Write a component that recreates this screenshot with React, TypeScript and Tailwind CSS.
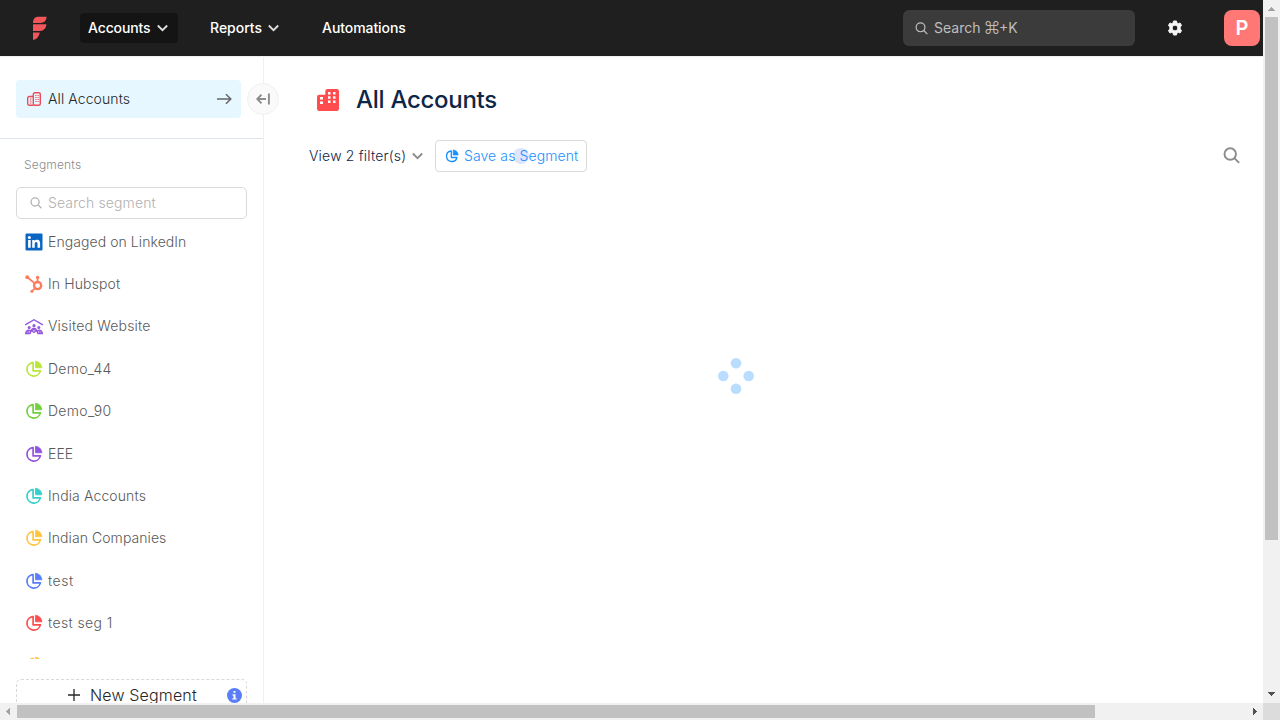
import React from "react";

type Row = { label: string; color: string; kind: "linkedin" | "hubspot" | "visit" | "pie"; tracking: string };

const rows: Row[] = [
  { label: "Engaged on LinkedIn", color: "#0a66c2", kind: "linkedin", tracking: "tracking-[.07px]" },
  { label: "In Hubspot", color: "#ff7a59", kind: "hubspot", tracking: "tracking-[.13px]" },
  { label: "Visited Website", color: "#9254de", kind: "visit", tracking: "tracking-[.19px]" },
  { label: "Demo_44", color: "#bae637", kind: "pie", tracking: "tracking-[.25px]" },
  { label: "Demo_90", color: "#73d13d", kind: "pie", tracking: "tracking-[.3px]" },
  { label: "EEE", color: "#9254de", kind: "pie", tracking: "tracking-[.1px]" },
  { label: "India Accounts", color: "#36cfc9", kind: "pie", tracking: "tracking-[.12px]" },
  { label: "Indian Companies", color: "#ffc53d", kind: "pie", tracking: "tracking-[.07px]" },
  { label: "test", color: "#597ef7", kind: "pie", tracking: "tracking-[.5px]" },
  { label: "test seg 1", color: "#ff4d4f", kind: "pie", tracking: "tracking-[.38px]" },
  { label: "", color: "#ffc53d", kind: "pie", tracking: "tracking-normal" },
];

function Pie({ color, size }: { color: string; size: number }) {
  return (
    <svg width={size} height={size} viewBox="0 0 18 18" fill="none" className="shrink-0">
      <path d="M7.5 2.6A6.8 6.8 0 1 0 15.4 10.9H8.1V2.5Z" stroke={color} strokeWidth="1.7" strokeLinejoin="round" />
      <path d="M10.5 1.2A7 7 0 0 1 16.9 7.8H10.5Z" fill={color} stroke={color} strokeWidth=".8" strokeLinejoin="round" />
    </svg>
  );
}

function SegmentIcon({ kind, color }: { kind: string; color: string }) {
  if (kind === "linkedin")
    return (
      <svg width="20" height="20" viewBox="0 0 20 20" className="shrink-0">
        <rect x="1.5" y="1.5" width="17" height="17" rx="1" fill={color} />
        <circle cx="5.4" cy="5.4" r="1.5" fill="white" />
        <path d="M4.1 8h2.6v7.8H4.1zM8.2 8h2.4v1.1c.5-.8 1.3-1.3 2.5-1.3 2.3 0 3 1.5 3 3.7v4.3h-2.6V12c0-1-.2-2-1.3-2s-1.5.9-1.5 2v3.8H8.2z" fill="white" />
      </svg>
    );
  if (kind === "hubspot")
    return (
      <svg width="20" height="20" viewBox="0 0 20 20" fill="none" stroke={color} className="shrink-0">
        <circle cx="13.6" cy="11.6" r="3.6" strokeWidth="2.3" />
        <path d="M13.6 8V4.2M10.6 9.2 3.5 3.5M11 14.2 8.2 17" strokeWidth="1.7" />
        <g fill={color} stroke="none">
          <circle cx="13.6" cy="3.4" r="1.7" />
          <circle cx="3.2" cy="3.2" r="1.9" />
          <circle cx="7.9" cy="17.2" r="1.5" />
        </g>
      </svg>
    );
  if (kind === "visit")
    return (
      <svg width="20" height="20" viewBox="0 0 20 20" fill="none" stroke={color} strokeWidth="1.4" className="shrink-0">
        <path d="M1.2 8.8 10 3.7l8.8 5.1" />
        <circle cx="5.2" cy="11.5" r=".9" />
        <circle cx="10" cy="9.7" r=".9" />
        <circle cx="14.8" cy="11.5" r=".9" />
        <path d="M1.7 17.4c.4-2.4 1.6-3.3 3.1-3.3 1.2 0 2 .8 2.4 1.8M7.2 15.4c.2-1.8 1.2-3 2.8-3s2.6 1.2 2.8 3M12.8 15.9c.4-1 1.2-1.8 2.4-1.8 1.5 0 2.7.9 3.1 3.3M1 17.5h5.5M13.5 17.5H19" />
        <circle cx="5.3" cy="16" r="1.4" />
        <circle cx="10" cy="14.8" r="1.4" />
        <circle cx="14.7" cy="16" r="1.4" />
      </svg>
    );
  return <Pie color={color} size={18} />;
}

function Search({ className, width = 1.6 }: { className: string; width?: number }) {
  return (
    <svg viewBox="0 0 16 16" fill="none" stroke="currentColor" strokeWidth={width} className={className}>
      <circle cx="6.8" cy="6.6" r="5.4" />
      <path d="m10.7 10.5 4.5 4.5" />
    </svg>
  );
}

function Chevron({ className }: { className: string }) {
  return (
    <svg width="11" height="8" viewBox="0 0 11 8" fill="none" stroke="currentColor" strokeWidth="1.8" className={className}>
      <path d="m.8 1.5 4.7 4.7 4.7-4.7" />
    </svg>
  );
}

function AccountsIcon() {
  return (
    <svg width="14" height="14" viewBox="0 0 14 14" fill="none" stroke="#ee4b58" strokeWidth="1.4">
      <path d="M6.3 13.2H2.2A1.5 1.5 0 0 1 .7 11.7V6a1.5 1.5 0 0 1 1.5-1.5h4.1" />
      <rect x="6.3" y=".7" width="7" height="12.5" rx="1.5" />
      <path d="M3 7h1.4M3 9h1.4M3 11h1.4M8.3 3.5h1.2M10.5 3.5h1.2M8.3 5.5h1.2M10.5 5.5h1.2M8.3 7.5h1.2M10.5 7.5h1.2M8.3 9.5h1.2M10.5 9.5h1.2" strokeWidth="1.1" />
    </svg>
  );
}

function Header() {
  return (
    <header className="flex h-14 shrink-0 items-center bg-[#1f1f1f] text-sm font-medium text-white">
      <svg width="15" height="25" viewBox="0 0 15 25" fill="#f0565a" className="ml-8 mr-[33px] shrink-0">
        <path d="M1 7V5.5Q1.8 1 6 .8h8.5v1.3Q13.5 7 8.5 7ZM1 8.3h13.5Q13.6 15 8 15H1ZM1 16.5h6.8Q6.6 23 1 24Z" />
      </svg>
      <div className="flex h-[30px] w-[98px] items-center rounded bg-[#141414] pl-2 tracking-[-.12px]">
        Accounts<Chevron className="ml-[6px] text-[#e0e0e0]" />
      </div>
      <div className="ml-8 flex items-center">
        Reports<Chevron className="ml-[6px] text-[#e0e0e0]" />
      </div>
      <div className="ml-[43px] tracking-[-.08px]">Automations</div>
      <div className="ml-auto flex h-9 w-[232px] items-center rounded-md bg-[#3b3b3b] pl-3 font-normal text-[#bfbfbf]">
        <Search className="mr-[6px] size-[13px]" width={1.5} />
        <span>Search</span>
        <span className="ml-[3px] w-[15.5px] text-[17px] font-light leading-5">⌘</span>
        <span>+K</span>
      </div>
      <svg width="16" height="16" viewBox="0 0 16 16" className="ml-[31.5px] shrink-0">
        <path fillRule="evenodd" fill="#f5f5f5" stroke="#f5f5f5" strokeLinejoin="round" d="M6.5 1h3l.4 2 1.3.7 1.9-.7 1.5 2.6L13.1 7v2l1.5 1.4-1.5 2.6-1.9-.7-1.3.7-.4 2h-3l-.4-2-1.3-.7-1.9.7-1.5-2.6L2.9 9V7L1.4 5.6 2.9 3l1.9.7L6.1 3ZM8 5.1a2.9 2.9 0 1 0 0 5.8 2.9 2.9 0 0 0 0-5.8Z" />
      </svg>
      <div className="ml-[41.5px] mr-[3px] flex size-9 items-center justify-center rounded-lg bg-[#ff7875] text-xl font-semibold">P</div>
    </header>
  );
}

function Sidebar() {
  return (
    <aside className="flex w-[264px] shrink-0 flex-col border-r border-[#f0f0f0] text-[#595959]">
      <div className="relative h-[83px] shrink-0 border-b border-[#dee4ec] pl-4 pt-6">
        <div className="flex h-[38px] w-[225px] items-center rounded bg-[#e6f7ff] pl-[11px] pr-[9px] text-sm font-light tracking-[.1px] text-[#262626]">
          <AccountsIcon />
          <span className="ml-[7px]">All Accounts</span>
          <svg width="15" height="12" viewBox="0 0 15 12" fill="none" stroke="#666" strokeWidth="1.5" className="ml-auto">
            <path d="M0 6h13.5M9 1.2 13.8 6 9 10.8" />
          </svg>
        </div>
        <div className="absolute -right-4 top-[27px] flex size-8 items-center justify-center rounded-full border border-[#f0f0f0] bg-[#fafafa]">
          <svg width="14" height="12" viewBox="0 0 14 12" fill="none" stroke="#8c8c8c" strokeWidth="1.9" className="-mt-px">
            <path d="M10 6H1.5M5.5 1.7 1.3 6l4.2 4.3M12.9.5v11" />
          </svg>
        </div>
      </div>
      <div className="ml-6 mt-[17px] h-[18px] text-xs font-light leading-[18px] tracking-[.18px] text-[#8c8c8c]">Segments</div>
      <div className="ml-4 mt-[13px] flex h-8 w-[231px] shrink-0 items-center rounded-[5px] border border-[#d9d9d9] pl-[13px] text-sm font-light tracking-[.12px] text-[#b0b0b0]">
        <Search className="mr-[6px] size-[12px]" width={1.7} />
        Search segment
      </div>
      <div className="mt-[1.6px] flex h-[438.4px] shrink-0 flex-col overflow-hidden text-sm font-light">
        {rows.map((row, i) => (
          <div key={i} className="flex h-[42.37px] shrink-0 items-center pl-6">
            <div className="mr-1 flex w-5 justify-center"><SegmentIcon kind={row.kind} color={row.color} /></div>
            <span className={row.tracking}>{row.label}</span>
          </div>
        ))}
      </div>
      <div className="ml-4 mt-[20px] flex h-8 w-[231px] shrink-0 items-center rounded-[5px] border border-dashed border-[#d9d9d9] pl-[51px] pr-1 text-base font-light tracking-[.16px] text-[#262626]">
        <svg width="12" height="12" viewBox="0 0 12 12" stroke="currentColor" strokeWidth="1.3" className="mr-[10px]"><path d="M0 6h12M6 0v12" /></svg>
        New Segment
        <svg width="15" height="15" viewBox="0 0 15 15" className="ml-auto mt-px"><circle cx="7.5" cy="7.5" r="7.5" fill="#597ef7" /><path d="M6.5 3h2v1.8h-2zM5.5 6.3h3v4.1h1.3v1.2H5.2v-1.2h1.3V7.5h-1z" fill="white" /></svg>
      </div>
    </aside>
  );
}

function Main() {
  return (
    <main className="flex flex-1 flex-col">
      <div className="mt-[28px] flex h-8 items-center pl-[53px]">
        <svg width="22" height="22" viewBox="0 0 22 22">
          <path d="M0 8a2.3 2.3 0 0 1 2.3-2.3h6V2.3A2.3 2.3 0 0 1 10.6 0h9.1A2.3 2.3 0 0 1 22 2.3v17.4a2.3 2.3 0 0 1-2.3 2.3H2.3A2.3 2.3 0 0 1 0 19.7Z" fill="#ff4d4f" />
          <path d="M3 8h3v2.5H3zM3 12.5h3V15H3zM11 3h2.5v2.5H11zM16 3h2.5v2.5H16zM11 7.2h2.5v2.5H11zM16 7.2h2.5v2.5H16zM11 11.5h2.5V14H11zM16 11.5h2.5V14H16z" fill="white" />
        </svg>
        <h1 className="ml-[17px] text-2xl font-medium tracking-[-.28px] text-[#0e2647]">All Accounts</h1>
      </div>
      <div className="mt-6 flex h-8 items-center pl-[45px] pr-[23px] text-sm font-light tracking-[.19px] text-[#0e2647]">
        <div className="flex w-[126px] items-center">
          View 2 filter(s)<Chevron className="ml-[6px] text-[#8c8c8c]" />
        </div>
        <div className="relative flex h-8 w-[152px] items-center rounded border border-[#d9d9d9] pl-[9px] tracking-[.1px] text-[#1890ff]">
          <Pie color="#1890ff" size={14} />
          <span className="ml-[5px]">Save as Segment</span>
          <div className="absolute left-[77px] top-[7px] size-4 rounded-full bg-[#597ef7]/20" />
        </div>
        <Search className="-mt-px ml-auto size-[17px] text-[#8c8c8c]" width={1.8} />
      </div>
      <svg width="38" height="38" viewBox="0 0 38 38" fill="#b9dcff" className="ml-[453px] mt-[185px]">
        <circle cx="19" cy="6.3" r="5.3" /><circle cx="6.3" cy="19" r="5.3" /><circle cx="31.7" cy="19" r="5.3" /><circle cx="19" cy="31.7" r="5.3" />
      </svg>
    </main>
  );
}

export default function App() {
  return (
    <div className="grid h-[720px] w-[1280px] grid-cols-[1263px_17px] grid-rows-[703px_17px] overflow-hidden bg-white font-['Inter',sans-serif]">
      <div className="flex min-h-0 flex-col overflow-hidden">
        <Header />
        <div className="flex min-h-0 flex-1 overflow-hidden shadow-[inset_0_1px_0_#eeeeee]">
          <Sidebar />
          <Main />
        </div>
      </div>
      <div className="flex flex-col items-center bg-[#f1f1f1]">
        <svg width="17" height="17" viewBox="0 0 17 17" fill="#a3a3a3" shapeRendering="crispEdges"><path d="m8.5 7 4 4h-8z" /></svg>
        <div className="h-[523px] w-[13px] bg-[#c1c1c1]" />
        <svg width="17" height="17" viewBox="0 0 17 17" fill="#505050" shapeRendering="crispEdges" className="mt-auto"><path d="m8.5 10 4-4h-8z" /></svg>
      </div>
      <div className="flex items-center bg-[#f1f1f1]">
        <svg width="17" height="17" viewBox="0 0 17 17" fill="#a3a3a3" shapeRendering="crispEdges"><path d="m6 8.5 4-4v8z" /></svg>
        <div className="h-[13px] w-[1078px] bg-[#c1c1c1]" />
        <svg width="17" height="17" viewBox="0 0 17 17" fill="#505050" shapeRendering="crispEdges" className="ml-auto"><path d="m11 8.5-4-4v8z" /></svg>
      </div>
      <div className="bg-[#dcdcdc]" />
    </div>
  );
}
